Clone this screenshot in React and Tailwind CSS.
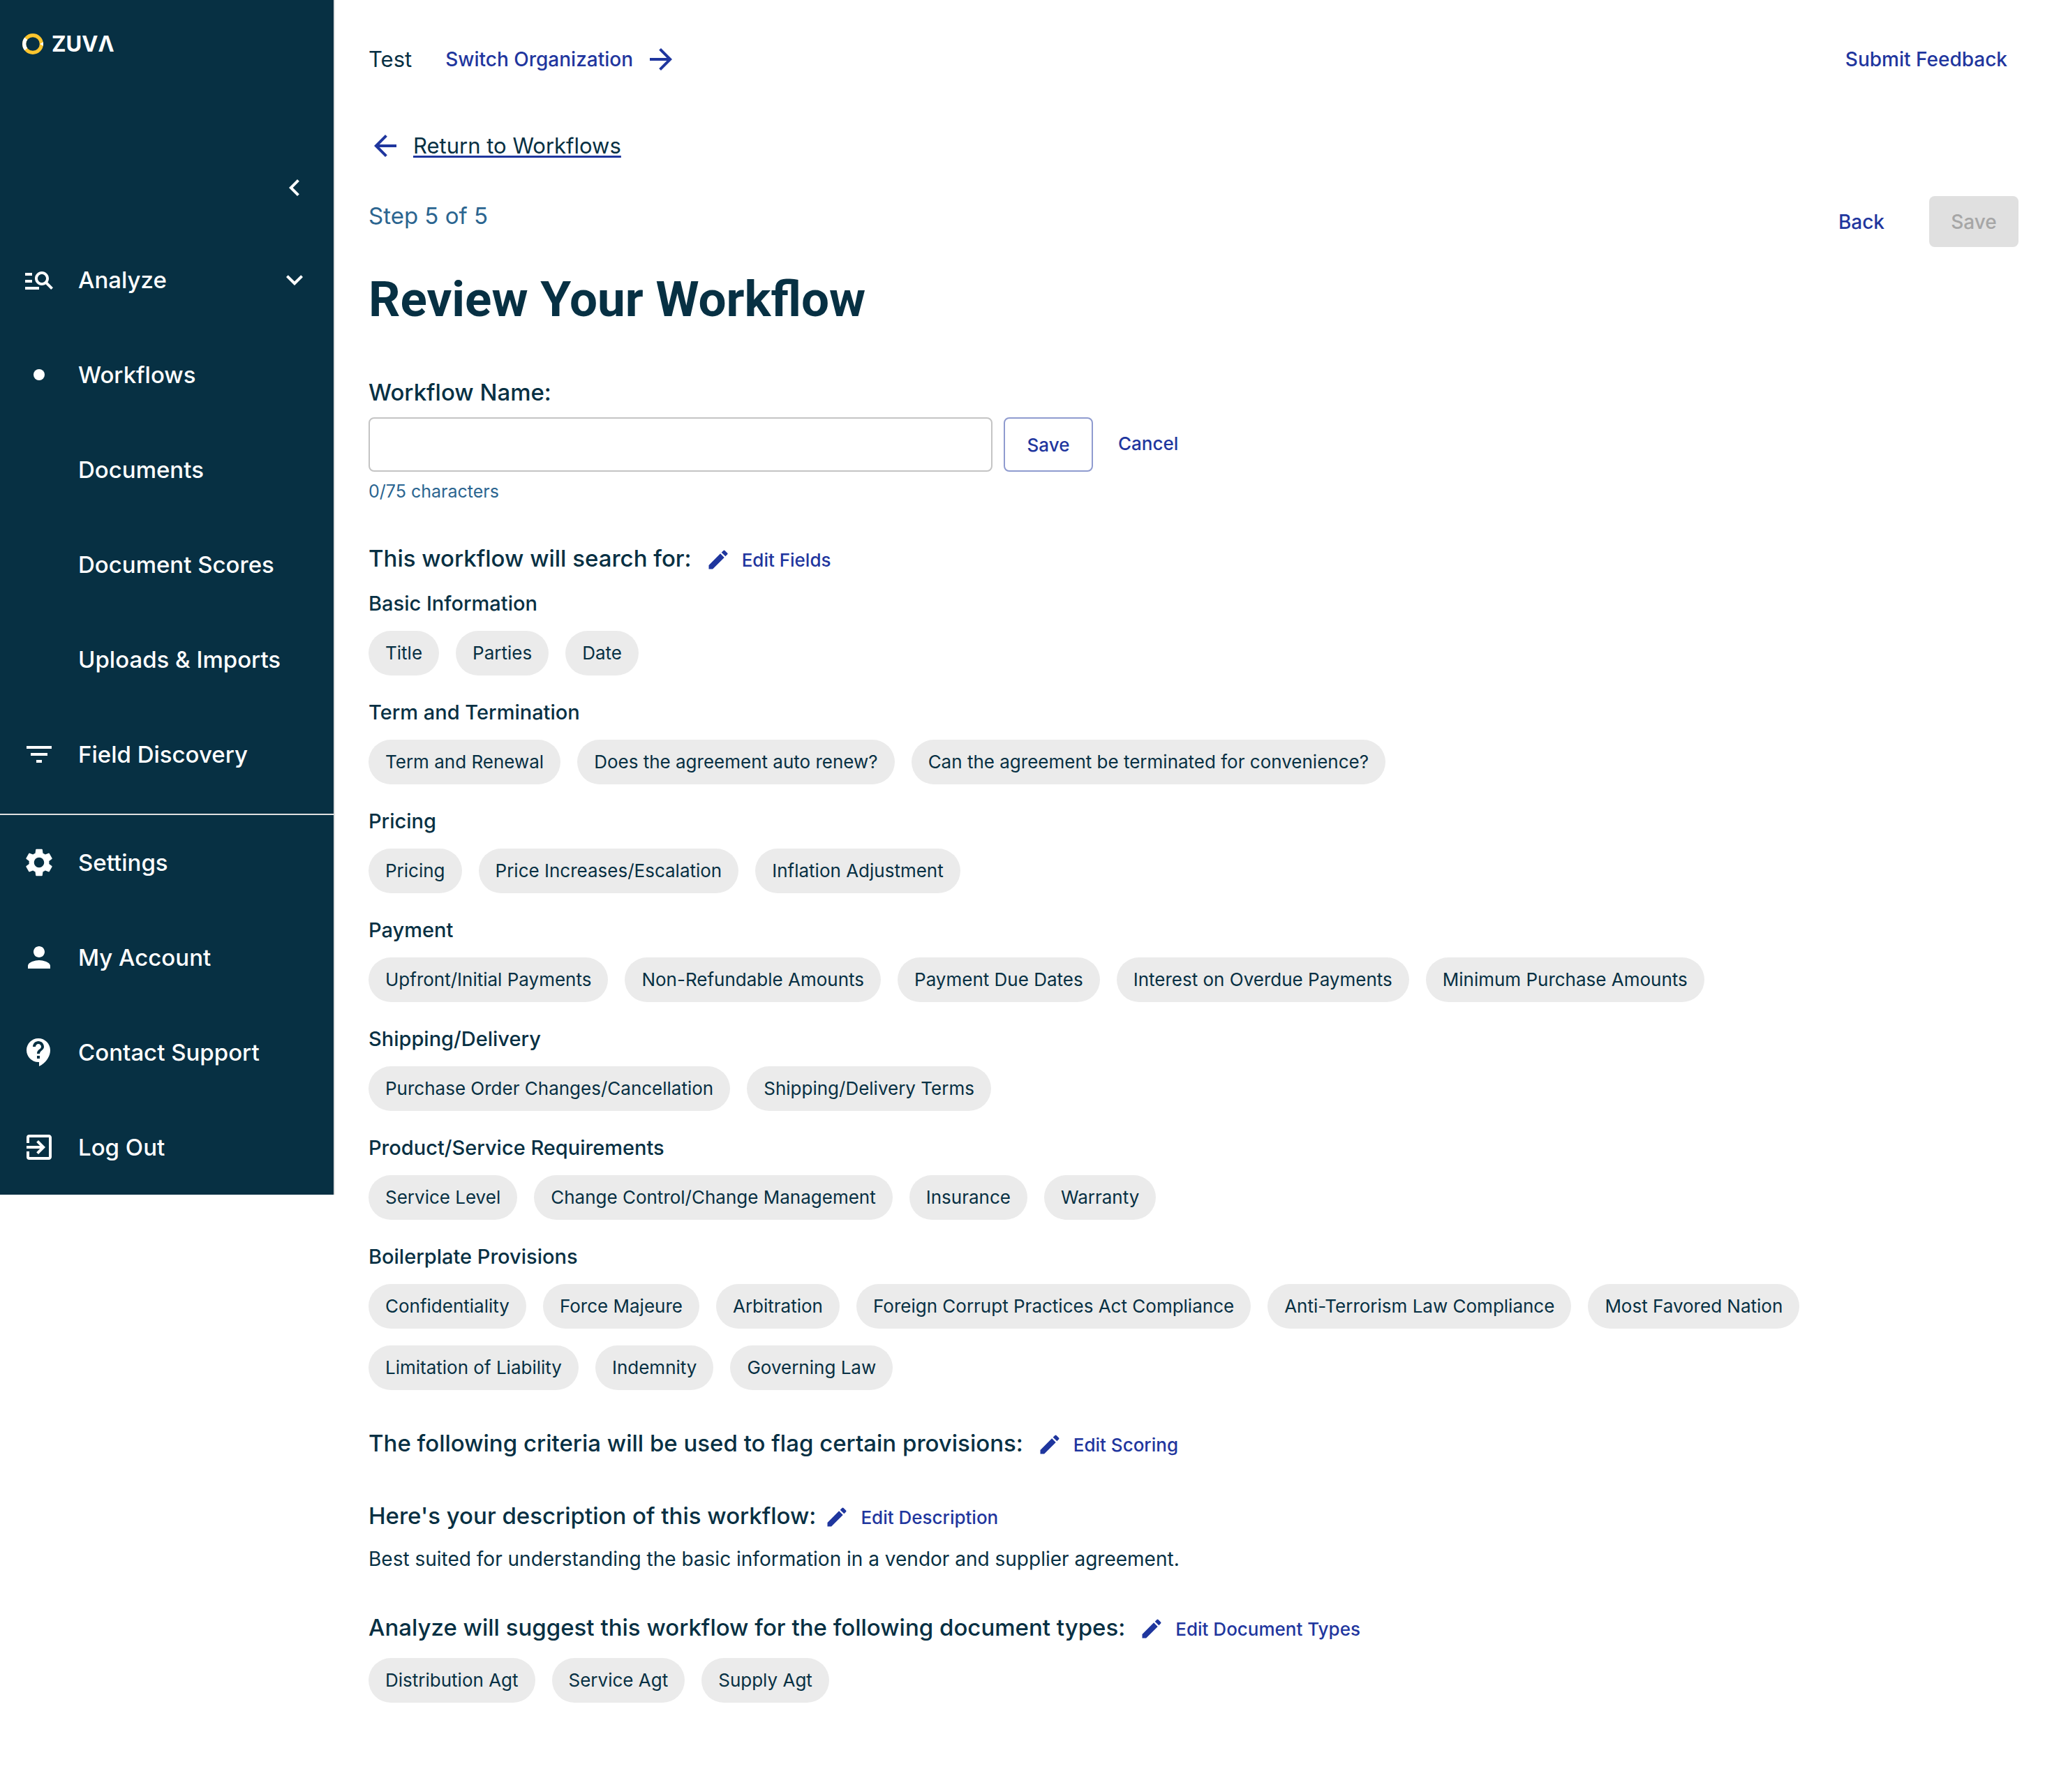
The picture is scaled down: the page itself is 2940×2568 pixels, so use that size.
import { useState } from "react";
import {
  MdArrowBack,
  MdArrowForward,
  MdChevronLeft,
  MdContactSupport,
  MdEdit,
  MdExitToApp,
  MdExpandMore,
  MdFilterList,
  MdManageSearch,
  MdPerson,
  MdSettings,
} from "react-icons/md";

const fieldGroups = [
  { name: "Basic Information", fields: ["Title", "Parties", "Date"] },
  {
    name: "Term and Termination",
    fields: [
      "Term and Renewal",
      "Does the agreement auto renew?",
      "Can the agreement be terminated for convenience?",
    ],
  },
  { name: "Pricing", fields: ["Pricing", "Price Increases/Escalation", "Inflation Adjustment"] },
  {
    name: "Payment",
    fields: [
      "Upfront/Initial Payments",
      "Non-Refundable Amounts",
      "Payment Due Dates",
      "Interest on Overdue Payments",
      "Minimum Purchase Amounts",
    ],
  },
  {
    name: "Shipping/Delivery",
    fields: ["Purchase Order Changes/Cancellation", "Shipping/Delivery Terms"],
  },
  {
    name: "Product/Service Requirements",
    fields: ["Service Level", "Change Control/Change Management", "Insurance", "Warranty"],
  },
  {
    name: "Boilerplate Provisions",
    fields: [
      "Confidentiality",
      "Force Majeure",
      "Arbitration",
      "Foreign Corrupt Practices Act Compliance",
      "Anti-Terrorism Law Compliance",
      "Most Favored Nation",
      "Limitation of Liability",
      "Indemnity",
      "Governing Law",
    ],
  },
];

function Logo() {
  return (
    <a href="#home" aria-label="Zuva" className="flex items-center gap-3 text-white">
      <svg viewBox="0 0 30 30" className="size-[30px]" aria-hidden="true">
        <circle cx="15" cy="15" r="12.4" fill="none" stroke="#fdc52e" strokeWidth="5.2" />
        <path d="M5.2 7.4 A12.4 12.4 0 0 0 5.2 22.6" fill="none" stroke="#fff" strokeWidth="5.2" />
        <path d="M25 15 L30 12.2 V17.8 Z" fill="#fff" />
      </svg>
      <span className="text-[31px] leading-[30px] font-bold">ZUVΛ</span>
    </a>
  );
}

function NavLink({ icon, children }) {
  return (
    <li>
      <a href="#nav" className="flex h-34 items-center gap-8 px-8 text-[33px] leading-10 font-medium">
        <span className="flex size-12 shrink-0 items-center justify-center">{icon}</span>
        {children}
      </a>
    </li>
  );
}

function Sidebar() {
  return (
    <aside className="w-[480px] shrink-0 self-start border-r-2 border-[#e0e0e0] bg-[#073043] text-white">
      <div className="px-8 pt-12">
        <Logo />
      </div>
      <div className="mt-[167px] flex justify-end pr-8">
        <button type="button" aria-label="Collapse menu">
          <MdChevronLeft className="size-12" />
        </button>
      </div>
      <nav aria-label="Main" className="mt-10">
        <button
          type="button"
          aria-expanded="true"
          className="flex h-34 w-full items-center gap-8 px-8 text-[33px] leading-10 font-medium"
        >
          <MdManageSearch className="size-12" />
          <span className="grow text-left">Analyze</span>
          <MdExpandMore className="size-12" />
        </button>
        <ul className="border-b-2 border-[#e0e0e0] pb-[17px]">
          <NavLink icon={<span className="size-4 rounded-full bg-white" />}>Workflows</NavLink>
          <NavLink>Documents</NavLink>
          <NavLink>Document Scores</NavLink>
          <NavLink>Uploads &amp; Imports</NavLink>
          <NavLink icon={<MdFilterList className="size-12" />}>Field Discovery</NavLink>
        </ul>
        <ul>
          <NavLink icon={<MdSettings className="size-12" />}>Settings</NavLink>
          <NavLink icon={<MdPerson className="size-12" />}>My Account</NavLink>
          <NavLink icon={<MdContactSupport className="size-12" />}>Contact Support</NavLink>
          <NavLink icon={<MdExitToApp className="size-12" />}>Log Out</NavLink>
        </ul>
      </nav>
    </aside>
  );
}

function Chips({ items }) {
  return (
    <ul className="flex flex-wrap gap-6">
      {items.map((item) => (
        <li key={item} className="flex h-16 items-center rounded-full bg-[#ebebeb] px-6 text-[26px] leading-8">
          {item}
        </li>
      ))}
    </ul>
  );
}

function SectionHeading({ title, action, gap = "gap-5" }) {
  return (
    <div className={`flex items-center ${gap}`}>
      <h2 className="text-[33px] leading-10 font-medium">{title}</h2>
      <button type="button" className="flex h-10 items-center gap-4 pt-1 text-[26px] font-medium text-[#1f369e]">
        <MdEdit className="size-9" />
        {action}
      </button>
    </div>
  );
}

export default function App() {
  const [name, setName] = useState("");
  return (
    <div className="flex bg-white font-['Inter',sans-serif] text-[#073043]">
      <Sidebar />
      <main className="min-w-0 grow pt-12 pr-12 pb-32 pl-12">
        <header className="flex h-[74px] items-center">
          <span className="text-[31px] leading-10">Test</span>
          <a href="#organizations" className="ml-12 flex items-center gap-4 text-[28px] font-medium text-[#1f369e]">
            Switch Organization
            <MdArrowForward className="size-12" />
          </a>
          <a href="#feedback" className="ml-auto pr-4 text-[28px] font-medium text-[#1f369e]">
            Submit Feedback
          </a>
        </header>

        <a href="#workflows" className="mt-[63px] flex w-fit items-center gap-4 text-[31px] leading-10">
          <MdArrowBack className="size-12 text-[#1f369e]" />
          <span className="underline decoration-[#1f369e] decoration-3 underline-offset-3">Return to Workflows</span>
        </a>

        <div className="mt-12 flex items-start justify-between">
          <div className="pt-2">
            <p className="text-[33px] leading-10 text-[#2b6590]">Step 5 of 5</p>
            <h1 className="mt-14 font-['Roboto',sans-serif] text-[71px] leading-[88px] font-bold">
              Review Your Workflow
            </h1>
          </div>
          <div className="flex gap-8 text-[28px] font-medium">
            <button type="button" className="h-[73px] px-8 text-[#1f369e]">
              Back
            </button>
            <button type="button" disabled className="h-[73px] w-32 rounded-lg bg-[#e0e0e0] text-[#a6a6a6]">
              Save
            </button>
          </div>
        </div>

        <form className="mt-[69px]" onSubmit={(event) => event.preventDefault()}>
          <label htmlFor="workflow-name" className="block text-[33px] leading-10 font-medium">
            Workflow Name:
          </label>
          <div className="mt-4 flex gap-4 text-[26px] font-medium text-[#1f369e]">
            <input
              id="workflow-name"
              type="text"
              maxLength={75}
              value={name}
              onChange={(event) => setName(event.target.value)}
              className="h-[78px] w-[894px] rounded-lg border-2 border-[#c4c4c4] px-6 text-[#073043]"
            />
            <button type="submit" className="h-[78px] w-32 rounded-lg border-2 border-[#8f9bcf]">
              Save
            </button>
            <button type="button" className="px-5 pb-1">
              Cancel
            </button>
          </div>
          <p className="mt-3 text-[25px] leading-8 text-[#2b6590]">{name.length}/75 characters</p>
        </form>

        <section className="mt-15">
          <SectionHeading title="This workflow will search for:" action="Edit Fields" />
          <div className="mt-[27px] flex flex-col gap-[35px]">
            {fieldGroups.map((group) => (
              <div key={group.name}>
                <h3 className="mb-[21px] text-[29px] leading-9 font-medium">{group.name}</h3>
                <Chips items={group.fields} />
              </div>
            ))}
          </div>
        </section>

        <section className="mt-14">
          <SectionHeading
            title="The following criteria will be used to flag certain provisions:"
            action="Edit Scoring"
          />
        </section>

        <section className="mt-16">
          <SectionHeading
            title="Here's your description of this workflow:"
            action="Edit Description"
            gap="gap-3"
          />
          <p className="mt-6 text-[28px] leading-9">
            Best suited for understanding the basic information in a vendor and supplier agreement.
          </p>
        </section>

        <section className="mt-15">
          <SectionHeading
            title="Analyze will suggest this workflow for the following document types:"
            action="Edit Document Types"
          />
          <div className="mt-6">
            <Chips items={["Distribution Agt", "Service Agt", "Supply Agt"]} />
          </div>
        </section>
      </main>
    </div>
  );
}
